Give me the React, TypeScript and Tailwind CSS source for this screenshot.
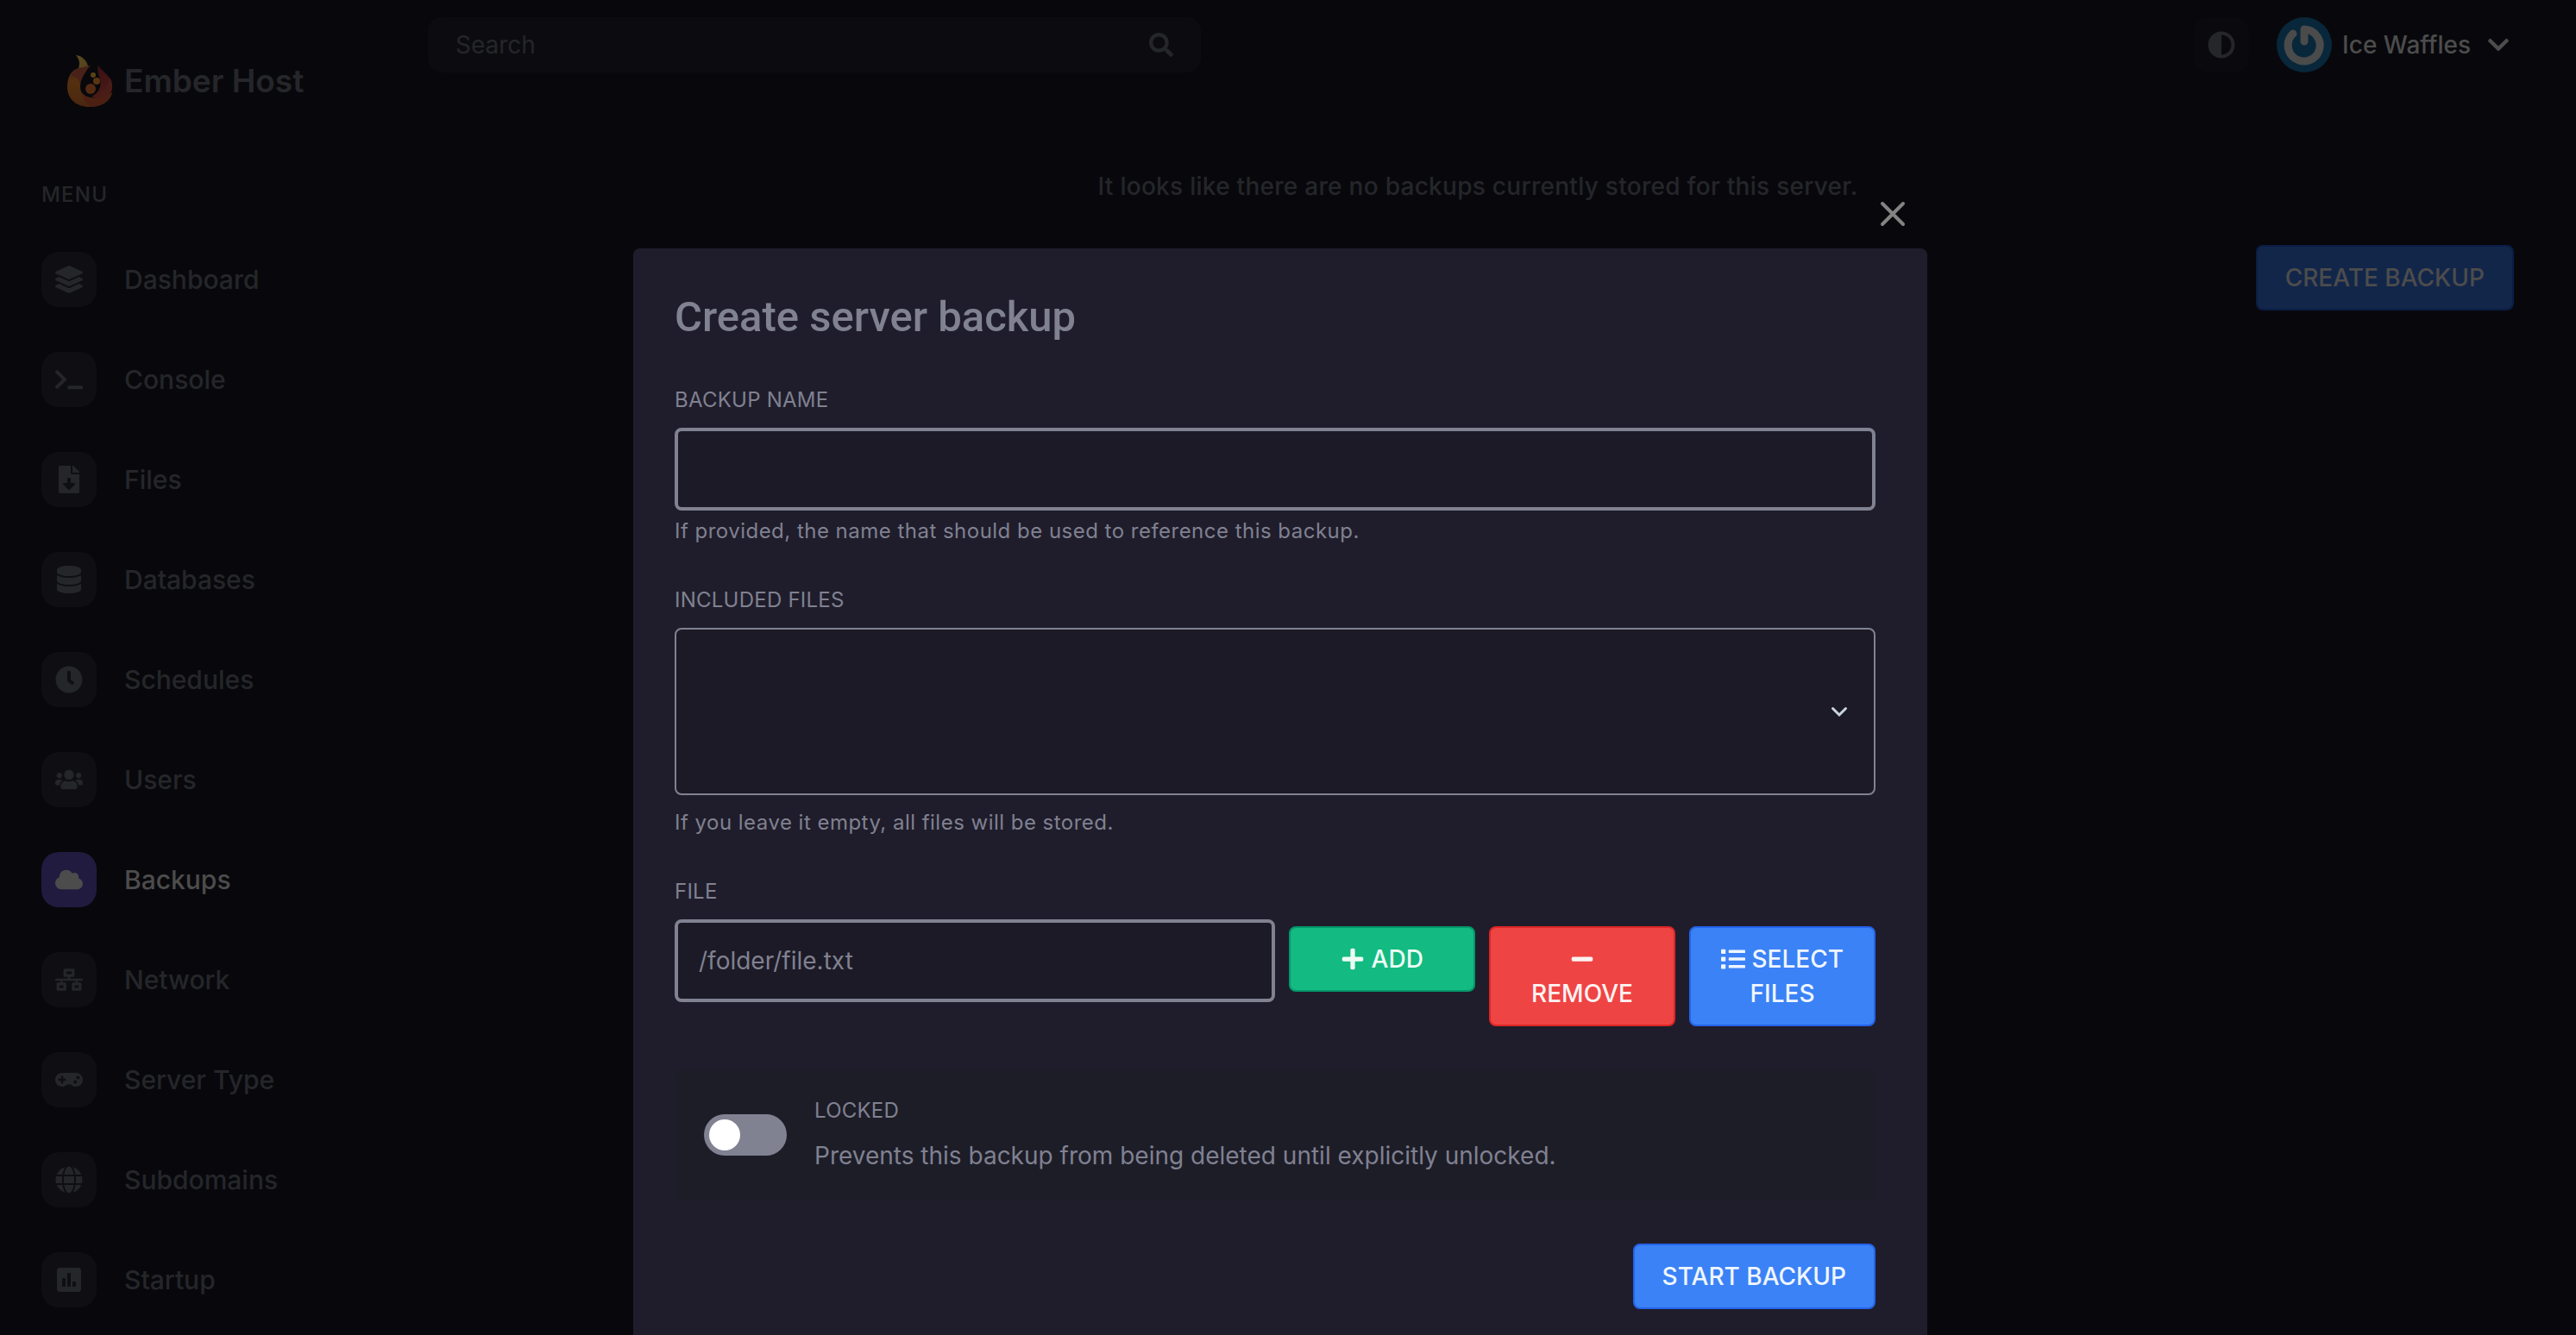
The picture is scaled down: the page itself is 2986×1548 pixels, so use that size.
import { useState } from "react";
import type { ReactNode } from "react";
import type { IconType } from "react-icons";
import {
  FaAdjust,
  FaChevronDown,
  FaClock,
  FaCloud,
  FaDatabase,
  FaFileDownload,
  FaGamepad,
  FaGlobe,
  FaLayerGroup,
  FaList,
  FaMinus,
  FaNetworkWired,
  FaPlus,
  FaPoll,
  FaSearch,
  FaTerminal,
  FaUsers,
} from "react-icons/fa";

const MENU: { label: string; icon: IconType; active?: boolean }[] = [
  { label: "Dashboard", icon: FaLayerGroup },
  { label: "Console", icon: FaTerminal },
  { label: "Files", icon: FaFileDownload },
  { label: "Databases", icon: FaDatabase },
  { label: "Schedules", icon: FaClock },
  { label: "Users", icon: FaUsers },
  { label: "Backups", icon: FaCloud, active: true },
  { label: "Network", icon: FaNetworkWired },
  { label: "Server Type", icon: FaGamepad },
  { label: "Subdomains", icon: FaGlobe },
  { label: "Startup", icon: FaPoll },
];

function FlameLogo() {
  return (
    <svg viewBox="0 0 52 60" className="h-15 w-13 shrink-0" aria-hidden="true">
      <defs>
        <linearGradient id="flameBody" x1="0" y1="0" x2="0" y2="1">
          <stop offset="0" stopColor="#4a2418" />
          <stop offset="0.4" stopColor="#54300f" />
          <stop offset="1" stopColor="#4a2611" />
        </linearGradient>
        <linearGradient id="flameTip" x1="0" y1="0" x2="1" y2="1">
          <stop offset="0" stopColor="#5a4c22" />
          <stop offset="1" stopColor="#54401b" />
        </linearGradient>
        <linearGradient id="flameRight" x1="0" y1="0" x2="0" y2="1">
          <stop offset="0" stopColor="#3b0f14" />
          <stop offset="1" stopColor="#4a1c16" />
        </linearGradient>
      </defs>
      <path d="M27 13C21 15 15 22 15 36C15 46 22 51 30 50C40 49 48 46 52 43C50 54 39 60 26 60C11 60 0 51 0 37C0 24 6 16 14 15Z" fill="url(#flameBody)" />
      <path d="M27 11C18 24 15 29 15 37C15 30 13 24 4 25C7 19 11 15 16 14C21 14 25 13 27 11Z" fill="#482118" />
      <path d="M10 0C18 1 23 7 24 13C20 14 17 14 13 15C15 9 14 5 10 0Z" fill="url(#flameTip)" />
      <path d="M36 11C37 18 52 22 52 37C52 42 50 45 45 47C40 49 34 50 28 48C37 44 40 36 38 28C37 23 34 18 36 11Z" fill="url(#flameRight)" />
      <path d="M49 26C48 36 42 44 30 49C42 50 49 46 51 41C53 36 52 30 49 26Z" fill="#4a1c18" />
      <path d="M17 43C21 49 28 50 36 49C43 48 49 46 52 43C50 52 42 58 29 60C22 57 18 50 17 43Z" fill="#4b2013" />
      <circle cx="30" cy="23" r="3" fill="#5a4310" />
      <circle cx="34" cy="30" r="4" fill="#5a3512" />
      <circle cx="27" cy="39" r="6" fill="#552a13" />
    </svg>
  );
}

function PowerAvatar() {
  return (
    <span className="flex size-16 items-center justify-center rounded-full bg-[#08273b]">
      <svg viewBox="0 0 48 48" className="size-12" fill="none" stroke="#4b4b4b" strokeWidth="9" strokeLinecap="round" strokeLinejoin="round" aria-hidden="true">
        <path d="M11 11A18.500 18.500 0 1 0 24 6V20" />
      </svg>
    </span>
  );
}

function Sidebar() {
  return (
    <aside className="w-[480px] shrink-0 px-12 pt-16">
      <div className="flex items-center gap-[14px] pl-[30px]">
        <FlameLogo />
        <span className="text-[37px] leading-[60px] font-semibold">Ember Host</span>
      </div>
      <h2 className="mt-[86px] text-[24px] leading-8 font-medium tracking-wider">MENU</h2>
      <nav className="mt-[50px]">
        <ul className="flex flex-col gap-13">
          {MENU.map(({ label, icon: Icon, active }) => (
            <li key={label}>
              <a href="#" className={active ? "flex items-center gap-8 text-[#4c4c4c]" : "flex items-center gap-8"}>
                <span
                  className={
                    active
                      ? "flex size-16 items-center justify-center rounded-[20px] bg-[#211b3f]"
                      : "flex size-16 items-center justify-center rounded-[20px] bg-[#0f0f13]"
                  }
                >
                  <Icon className="size-8" />
                </span>
                <span className="text-[30px] leading-10 font-medium">{label}</span>
              </a>
            </li>
          ))}
        </ul>
      </nav>
    </aside>
  );
}

function TopBar() {
  return (
    <header className="flex items-center justify-between pt-5 pr-[76px] pl-4">
      <div className="flex h-16 w-[896px] items-center rounded-2xl bg-[#0c0c10] px-8">
        <input
          type="search"
          aria-label="Search"
          placeholder="Search"
          className="min-w-0 flex-1 bg-transparent text-[28px] leading-10 outline-none placeholder:text-[#25262a]"
        />
        <FaSearch className="size-7" />
      </div>
      <div className="flex items-center">
        <button type="button" aria-label="Toggle theme" className="flex size-16 items-center justify-center rounded-2xl bg-[#0a0a0e]">
          <FaAdjust className="size-8" />
        </button>
        <button type="button" className="ml-8 flex items-center text-[#4c4c4c]">
          <PowerAvatar />
          <span className="ml-3 text-[28px] leading-10 font-medium">Ice Waffles</span>
          <FaChevronDown className="ml-[18px] size-7" />
        </button>
      </div>
    </header>
  );
}

const BUTTON = "rounded-lg border-2 px-8 py-4 text-[28px] leading-10 font-medium uppercase";

function Field({ id, label, hint, children }: { id: string; label: string; hint?: ReactNode; children: ReactNode }) {
  return (
    <div>
      <label htmlFor={id} className="block pb-4 text-[24px] leading-8 tracking-[0.01em] uppercase">
        {label}
      </label>
      {children}
      {hint}
    </div>
  );
}

function BackupDialog() {
  const [locked, setLocked] = useState(false);
  return (
    <div className="fixed inset-0 overflow-hidden pr-[18px]">
      <div role="dialog" aria-modal="true" aria-labelledby="dialog-title" className="mx-auto w-[1500px] max-w-full pt-56 text-[#808191]">
        <div className="flex h-16 items-start justify-end pr-4">
          <button type="button" aria-label="Close" className="text-[#838383]">
            <svg viewBox="0 0 48 48" className="size-12" fill="none" stroke="currentColor" strokeWidth="4" strokeLinecap="round" aria-hidden="true">
              <path d="M12 12L36 36M36 12L12 36" />
            </svg>
          </button>
        </div>
        <form className="rounded-lg bg-[#1f1d2b] pt-12 pr-[60px] pb-12 pl-12" onSubmit={(e) => e.preventDefault()}>
          <h1 id="dialog-title" className="font-[Roboto,sans-serif] text-[49px] leading-16 font-medium">
            Create server backup
          </h1>
          <div className="mt-12">
            <Field
              id="backup-name"
              label="Backup name"
              hint={<p className="mt-2 text-[24px] leading-8 tracking-[0.02em]">If provided, the name that should be used to reference this backup.</p>}
            >
              <input id="backup-name" type="text" className="block h-24 w-full rounded-lg border-4 border-[#808191] bg-[#1c1a26] px-6 text-[28px] outline-none" />
            </Field>
          </div>
          <div className="mt-12">
            <Field
              id="included-files"
              label="Included files"
              hint={<p className="mt-4 text-[24px] leading-8 tracking-[0.02em]">If you leave it empty, all files will be stored.</p>}
            >
              <div className="grid items-center">
                <select
                  id="included-files"
                  className="col-start-1 row-start-1 block h-[194px] w-full appearance-none rounded-lg border-2 border-[#808191] bg-[#1c1a26] px-6 outline-none"
                >
                  <option value="" />
                </select>
                <svg
                  viewBox="0 0 36 36"
                  className="pointer-events-none col-start-1 row-start-1 mr-6 size-9 justify-self-end stroke-[#cbd5e1]"
                  fill="none"
                  strokeWidth="3"
                  strokeLinecap="round"
                  aria-hidden="true"
                >
                  <path d="M10.500 14.500L18 22L25.500 14.500" />
                </svg>
              </div>
            </Field>
          </div>
          <div className="mt-12">
            <Field id="file-path" label="File">
              <div className="flex items-start gap-4">
                <input
                  id="file-path"
                  type="text"
                  placeholder="/folder/file.txt"
                  className="block h-24 w-1/2 shrink-0 rounded-lg border-4 border-[#808191] bg-[#1c1a26] px-6 text-[28px] outline-none placeholder:text-[#808191]"
                />
                <div className="grid flex-1 grid-cols-3 items-start gap-4 pt-2">
                  <button type="button" className={`${BUTTON} border-[#059669] bg-[#13ba81] text-[#ecfdf5]`}>
                    <FaPlus className="inline size-7 align-[-4px]" /> Add
                  </button>
                  <button type="button" className={`${BUTTON} border-[#dc2626] bg-[#ef4444] text-[#fef2f2]`}>
                    <FaMinus className="inline size-7 align-[-4px]" /> Remove
                  </button>
                  <button type="button" className={`${BUTTON} border-[#2563eb] bg-[#3b82f6] text-[#eff6ff]`}>
                    <FaList className="inline size-7 align-[-4px]" /> Select files
                  </button>
                </div>
              </div>
            </Field>
          </div>
          <label className="mt-[50px] flex items-center rounded-lg bg-[#1d1d28] px-[34px] py-8">
            <input type="checkbox" role="switch" checked={locked} onChange={(e) => setLocked(e.target.checked)} className="peer sr-only" />
            <span className="flex h-12 w-24 shrink-0 items-center rounded-full bg-[#808191] px-[6px] peer-checked:justify-end">
              <span className="size-9 rounded-full bg-white" />
            </span>
            <span className="ml-8">
              <span className="block pb-4 text-[24px] leading-8 tracking-[0.01em] uppercase">Locked</span>
              <span className="block text-[28px] leading-10">Prevents this backup from being deleted until explicitly unlocked.</span>
            </span>
          </label>
          <div className="mt-[50px] flex justify-end">
            <button type="submit" className={`${BUTTON} border-[#2563eb] bg-[#3b82f6] text-[#eff6ff]`}>
              Start backup
            </button>
          </div>
        </form>
      </div>
    </div>
  );
}

export default function App() {
  return (
    <div className="flex h-screen overflow-hidden bg-[#08080c] font-[Inter,sans-serif] text-[#25262a]">
      <Sidebar />
      <div className="min-w-0 flex-1">
        <TopBar />
        <main className="pt-28 pr-[72px] pl-8">
          <p className="text-center text-[28px] leading-10 font-medium tracking-[0.01em]">It looks like there are no backups currently stored for this server.</p>
          <div className="mt-12 flex justify-end">
            <button type="button" className={`${BUTTON} border-[#0b1c46] bg-[#12264a] text-[#4c4c4c]`}>
              Create backup
            </button>
          </div>
        </main>
      </div>
      <BackupDialog />
    </div>
  );
}
